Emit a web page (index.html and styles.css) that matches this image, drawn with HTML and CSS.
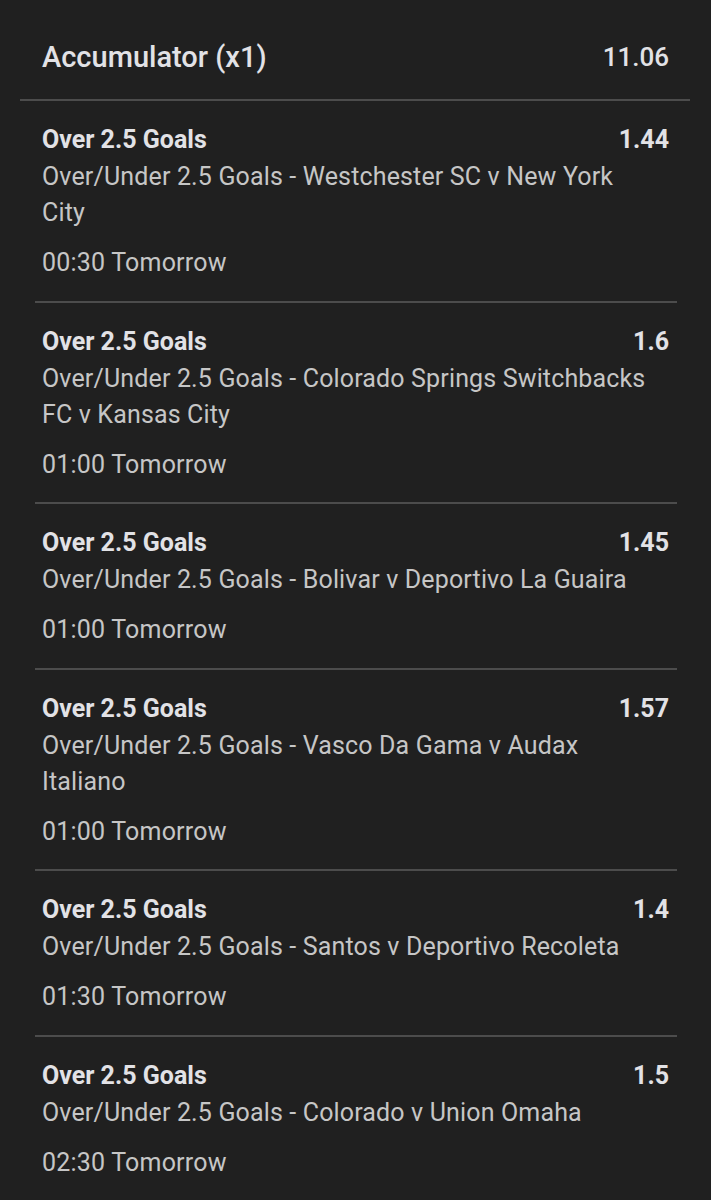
FILE: index.html
```html
<!DOCTYPE html>
<html lang="en">
<head>
    <meta charset="UTF-8">
    <meta name="viewport" content="width=device-width, initial-scale=1.0">
    <title>Bet Slip</title>
    <link rel="stylesheet" href="styles.css">
</head>
<body>
    <div class="slip">
        <div class="slip-header">
            <span class="slip-title">Accumulator (x1)</span>
            <span class="slip-odds">11.06</span>
        </div>

        <div class="leg">
            <div class="leg-top">
                <span class="leg-title">Over 2.5 Goals</span>
                <span class="leg-odds">1.44</span>
            </div>
            <div class="leg-desc">Over/Under 2.5 Goals - Westchester SC v New York City</div>
            <div class="leg-time">00:30 Tomorrow</div>
        </div>

        <div class="leg">
            <div class="leg-top">
                <span class="leg-title">Over 2.5 Goals</span>
                <span class="leg-odds">1.6</span>
            </div>
            <div class="leg-desc">Over/Under 2.5 Goals - Colorado Springs Switchbacks FC v Kansas City</div>
            <div class="leg-time">01:00 Tomorrow</div>
        </div>

        <div class="leg">
            <div class="leg-top">
                <span class="leg-title">Over 2.5 Goals</span>
                <span class="leg-odds">1.45</span>
            </div>
            <div class="leg-desc">Over/Under 2.5 Goals - Bolivar v Deportivo La Guaira</div>
            <div class="leg-time">01:00 Tomorrow</div>
        </div>

        <div class="leg">
            <div class="leg-top">
                <span class="leg-title">Over 2.5 Goals</span>
                <span class="leg-odds">1.57</span>
            </div>
            <div class="leg-desc">Over/Under 2.5 Goals - Vasco Da Gama v Audax Italiano</div>
            <div class="leg-time">01:00 Tomorrow</div>
        </div>

        <div class="leg">
            <div class="leg-top">
                <span class="leg-title">Over 2.5 Goals</span>
                <span class="leg-odds">1.4</span>
            </div>
            <div class="leg-desc">Over/Under 2.5 Goals - Santos v Deportivo Recoleta</div>
            <div class="leg-time">01:30 Tomorrow</div>
        </div>

        <div class="leg">
            <div class="leg-top">
                <span class="leg-title">Over 2.5 Goals</span>
                <span class="leg-odds">1.5</span>
            </div>
            <div class="leg-desc">Over/Under 2.5 Goals - Colorado v Union Omaha</div>
            <div class="leg-time">02:30 Tomorrow</div>
        </div>
    </div>
</body>
</html>
```

FILE: styles.css
```css
body {
    margin: 0;
    background: #202020;
    font-family: Roboto, "Liberation Sans", sans-serif;
    color: #e2e2e6;
}
.slip {
    padding: 0 21px 0 20px;
}
.slip-header {
    display: flex;
    justify-content: space-between;
    align-items: center;
    height: 85px;
    padding: 14px 21px 0 22px;
    border-bottom: 2px solid #4c4c4c;
    font-weight: 500;
}
.slip-title {
    font-size: 29px;
}
.slip-odds {
    font-size: 26px;
}
.leg {
    margin: 0 13px 0 15px;
    padding: 21px 8px 19.6px 7px;
    border-bottom: 2px solid #4c4c4c;
    line-height: 36px;
}
.leg:last-child {
    border-bottom: none;
}
.leg-top {
    display: flex;
    justify-content: space-between;
    font-size: 25px;
    font-weight: 700;
    color: #e2e2e6;
}
.leg-desc {
    max-width: 615px;
    margin-top: 1px;
    font-size: 25px;
    letter-spacing: 0.15px;
    color: #c6c6c6;
}
.leg-time {
    margin-top: 14px;
    font-size: 25px;
    letter-spacing: 0.2px;
    color: #c6c6c6;
}
```
